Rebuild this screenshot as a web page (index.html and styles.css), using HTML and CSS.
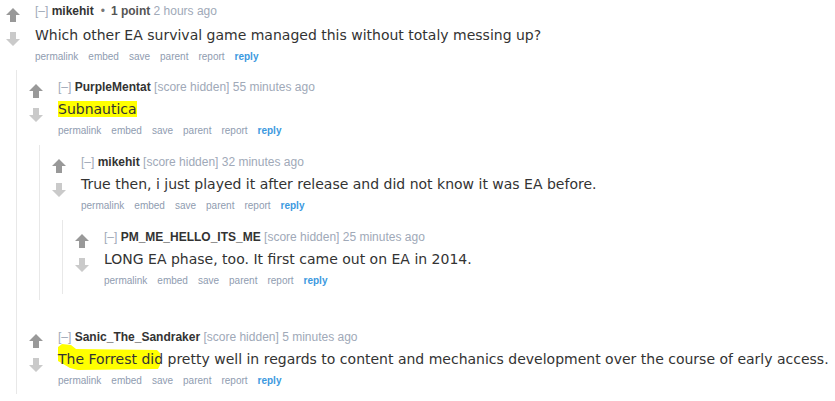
FILE: index.html
```html
<!DOCTYPE html>
<html lang="en">
<head>
<meta charset="UTF-8">
<meta name="viewport" content="width=device-width, initial-scale=1.0">
<title>Comments</title>
<link rel="stylesheet" href="styles.css">
</head>
<body>

<div class="sitetable">

  <div class="comment">
    <div class="midcol">
      <svg class="arrow up" viewBox="0 0 14 14"><path d="M7 0 L14 7 H10 V14 H4 V7 H0 Z"/></svg>
      <svg class="arrow down" viewBox="0 0 14 14"><path d="M7 14 L14 7 H10 V0 H4 V7 H0 Z"/></svg>
    </div>
    <div class="entry">
      <p class="tagline"><span class="expand">[–]</span> <span class="author">mikehit</span><span class="dot">•</span><span class="score">1 point</span> <span class="time">2 hours ago</span></p>
      <div class="md">Which other EA survival game managed this without totaly messing up?</div>
      <ul class="buttons">
        <li>permalink</li><li>embed</li><li>save</li><li>parent</li><li>report</li><li class="reply">reply</li>
      </ul>
    </div>

    <div class="child">

      <div class="comment">
        <div class="midcol">
          <svg class="arrow up" viewBox="0 0 14 14"><path d="M7 0 L14 7 H10 V14 H4 V7 H0 Z"/></svg>
          <svg class="arrow down" viewBox="0 0 14 14"><path d="M7 14 L14 7 H10 V0 H4 V7 H0 Z"/></svg>
        </div>
        <div class="entry">
          <p class="tagline"><span class="expand">[–]</span> <span class="author">PurpleMentat</span> <span class="time">[score hidden] 55 minutes ago</span></p>
          <div class="md"><span class="hl">Subnautica</span></div>
          <ul class="buttons">
            <li>permalink</li><li>embed</li><li>save</li><li>parent</li><li>report</li><li class="reply">reply</li>
          </ul>
        </div>

        <div class="child">

          <div class="comment">
            <div class="midcol">
              <svg class="arrow up" viewBox="0 0 14 14"><path d="M7 0 L14 7 H10 V14 H4 V7 H0 Z"/></svg>
              <svg class="arrow down" viewBox="0 0 14 14"><path d="M7 14 L14 7 H10 V0 H4 V7 H0 Z"/></svg>
            </div>
            <div class="entry">
              <p class="tagline"><span class="expand">[–]</span> <span class="author">mikehit</span> <span class="time">[score hidden] 32 minutes ago</span></p>
              <div class="md">True then, i just played it after release and did not know it was EA before.</div>
              <ul class="buttons">
                <li>permalink</li><li>embed</li><li>save</li><li>parent</li><li>report</li><li class="reply">reply</li>
              </ul>
            </div>

            <div class="child">

              <div class="comment">
                <div class="midcol">
                  <svg class="arrow up" viewBox="0 0 14 14"><path d="M7 0 L14 7 H10 V14 H4 V7 H0 Z"/></svg>
                  <svg class="arrow down" viewBox="0 0 14 14"><path d="M7 14 L14 7 H10 V0 H4 V7 H0 Z"/></svg>
                </div>
                <div class="entry">
                  <p class="tagline"><span class="expand">[–]</span> <span class="author">PM_ME_HELLO_ITS_ME</span> <span class="time">[score hidden] 25 minutes ago</span></p>
                  <div class="md">LONG EA phase, too. It first came out on EA in 2014.</div>
                  <ul class="buttons">
                    <li>permalink</li><li>embed</li><li>save</li><li>parent</li><li>report</li><li class="reply">reply</li>
                  </ul>
                </div>
              </div>

            </div>
          </div>

        </div>
      </div>

      <div class="comment">
        <div class="midcol">
          <svg class="arrow up" viewBox="0 0 14 14"><path d="M7 0 L14 7 H10 V14 H4 V7 H0 Z"/></svg>
          <svg class="arrow down" viewBox="0 0 14 14"><path d="M7 14 L14 7 H10 V0 H4 V7 H0 Z"/></svg>
        </div>
        <div class="entry">
          <p class="tagline"><span class="expand">[–]</span> <span class="author">Sanic_The_Sandraker</span> <span class="time">[score hidden] 5 minutes ago</span></p>
          <div class="md"><span class="marker">The Forrest did</span> pretty well in regards to content and mechanics development over the course of early access.</div>
          <ul class="buttons">
            <li>permalink</li><li>embed</li><li>save</li><li>parent</li><li>report</li><li class="reply">reply</li>
          </ul>
        </div>
      </div>

    </div>
  </div>

</div>

</body>
</html>
```

FILE: styles.css
```css
body {
  margin: 0;
  background-color: #fff;
  font-family: "Liberation Sans", Arial, sans-serif;
  color: #333;
}
.comment {
  display: grid;
  grid-template-columns: 35px 1fr;
  padding-top: 9px;
  padding-bottom: 6px;
}
.comment + .comment {
  margin-top: 14px;
}
/* top level comment sits a bit higher and looser */
.sitetable > .comment {
  padding-top: 3px;
}
.sitetable > .comment > .entry .md {
  margin-top: 6px;
}
.sitetable > .comment > .child {
  margin-top: 6px;
}
.midcol {
  display: flex;
  flex-direction: column;
  gap: 10px;
  padding-top: 5px;
  padding-left: 6px;
}
.arrow {
  display: block;
  width: 14px;
  height: 14px;
}
.arrow.up {
  fill: #999;
}
.arrow.down {
  fill: #cacaca;
}
.tagline {
  margin: 0;
  font-size: 12px;
  line-height: 16px;
  color: #a0a9b8;
  white-space: nowrap;
}
.author {
  font-weight: bold;
  color: #333;
}
.dot {
  margin: 0 6px 0 7px;
  color: #777;
}
.score {
  font-weight: bold;
  color: #555;
}
.md {
  margin-top: 4px;
  font-family: "DejaVu Sans", Verdana, sans-serif;
  font-size: 14px;
  line-height: 20px;
  color: #333;
  white-space: nowrap;
}
.hl {
  background-color: #ffff00;
}
/* marker stroke drawn over the first words */
.marker {
  position: relative;
  z-index: 0;
}
.marker::before {
  content: "";
  position: absolute;
  left: 0;
  top: -7px;
  width: 102px;
  height: 27px;
  background-color: #ffff00;
  z-index: -1;
  clip-path: polygon(0 3px, 4px 0, 13px 1px, 18px 5px, 99px 6px, 102px 9px, 102px 21px, 100px 25px, 20px 26px, 12px 24px, 0 17px);
}
.buttons {
  display: flex;
  gap: 10px;
  list-style: none;
  margin: 5px 0 0;
  padding: 0;
  font-size: 10px;
  line-height: 14px;
  color: #8f9cb0;
}
.buttons .reply {
  font-weight: bold;
  color: #3b99e0;
}
.child {
  grid-column: 1 / -1;
  margin-top: 7px;
  margin-left: 16px;
  padding-left: 6px;
  border-left: 1px solid #e8e8e8;
}
```
